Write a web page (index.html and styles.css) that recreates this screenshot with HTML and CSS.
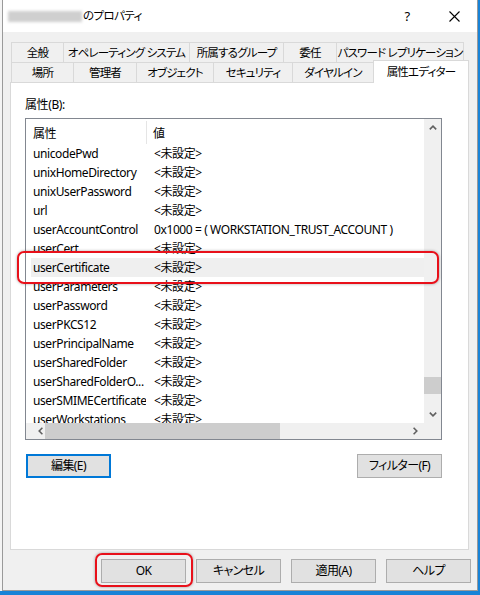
FILE: index.html
```html
<!DOCTYPE html>
<html lang="ja">
<head>
<meta charset="utf-8">
<title>プロパティ</title>
<link rel="stylesheet" href="styles.css">
</head>
<body>
<div class="screen">
  <div class="gap"></div>
  <div class="window">
    <div class="titlebar">
      <div class="title"><span class="redacted"></span><span class="title-text">のプロパティ</span></div>
      <div class="caption">
        <span class="cap-btn help">?</span>
        <span class="cap-btn close"><svg width="11" height="11" viewBox="0 0 11 11"><path d="M0.5 0.5 L10.5 10.5 M10.5 0.5 L0.5 10.5" stroke="#000" stroke-width="1.1" fill="none"/></svg></span>
      </div>
    </div>
    <div class="client">
      <div class="tabs">
        <div class="tabrow">
          <div class="tab t1">全般</div>
          <div class="tab t2">オペレーティング システム</div>
          <div class="tab t3">所属するグループ</div>
          <div class="tab t4">委任</div>
          <div class="tab t5 last">パスワード レプリケーション</div>
        </div>
        <div class="tabrow">
          <div class="tab u1">場所</div>
          <div class="tab u2">管理者</div>
          <div class="tab u3">オブジェクト</div>
          <div class="tab u4">セキュリティ</div>
          <div class="tab u5">ダイヤルイン</div>
          <div class="tab u6 sel">属性エディター</div>
        </div>
      </div>
      <div class="panel">
        <div class="label">属性(B):</div>
        <div class="listbox">
          <div class="listview">
            <div class="lv-header"><div class="h-name">属性</div><div class="h-val">値</div></div>
            <div class="lv-row"><div class="c-name">unicodePwd</div><div class="c-val">&lt;未設定&gt;</div></div>
            <div class="lv-row"><div class="c-name">unixHomeDirectory</div><div class="c-val">&lt;未設定&gt;</div></div>
            <div class="lv-row"><div class="c-name">unixUserPassword</div><div class="c-val">&lt;未設定&gt;</div></div>
            <div class="lv-row"><div class="c-name">url</div><div class="c-val">&lt;未設定&gt;</div></div>
            <div class="lv-row"><div class="c-name">userAccountControl</div><div class="c-val">0x1000 = ( WORKSTATION_TRUST_ACCOUNT )</div></div>
            <div class="lv-row"><div class="c-name">userCert</div><div class="c-val">&lt;未設定&gt;</div></div>
            <div class="lv-row sel"><div class="c-name">userCertificate</div><div class="c-val">&lt;未設定&gt;</div></div>
            <div class="lv-row"><div class="c-name">userParameters</div><div class="c-val">&lt;未設定&gt;</div></div>
            <div class="lv-row"><div class="c-name">userPassword</div><div class="c-val">&lt;未設定&gt;</div></div>
            <div class="lv-row"><div class="c-name">userPKCS12</div><div class="c-val">&lt;未設定&gt;</div></div>
            <div class="lv-row"><div class="c-name">userPrincipalName</div><div class="c-val">&lt;未設定&gt;</div></div>
            <div class="lv-row"><div class="c-name">userSharedFolder</div><div class="c-val">&lt;未設定&gt;</div></div>
            <div class="lv-row"><div class="c-name">userSharedFolderO...</div><div class="c-val">&lt;未設定&gt;</div></div>
            <div class="lv-row"><div class="c-name">userSMIMECertificate</div><div class="c-val">&lt;未設定&gt;</div></div>
            <div class="lv-row"><div class="c-name">userWorkstations</div><div class="c-val">&lt;未設定&gt;</div></div>
          </div>
          <div class="vscroll">
            <div class="sb-btn"><svg width="8" height="5" viewBox="0 0 8 5"><path d="M0.8 4.4 L4 1.2 L7.2 4.4" stroke="#606060" stroke-width="1.6" fill="none"/></svg></div>
            <div class="v-track"><div class="v-thumb"></div></div>
            <div class="sb-btn"><svg width="8" height="5" viewBox="0 0 8 5"><path d="M0.8 0.6 L4 3.8 L7.2 0.6" stroke="#606060" stroke-width="1.6" fill="none"/></svg></div>
          </div>
          <div class="hscroll">
            <div class="sb-btn hl"><svg width="5" height="8" viewBox="0 0 5 8"><path d="M4.4 0.8 L1.2 4 L4.4 7.2" stroke="#606060" stroke-width="1.6" fill="none"/></svg></div>
            <div class="h-track"><div class="h-thumb"></div></div>
            <div class="sb-btn hr"><svg width="5" height="8" viewBox="0 0 5 8"><path d="M0.6 0.8 L3.8 4 L0.6 7.2" stroke="#606060" stroke-width="1.6" fill="none"/></svg></div>
          </div>
          <div class="corner"></div>
        </div>
        <div class="panel-btns">
          <button class="btn focus">編集(E)</button>
          <button class="btn">フィルター(F)</button>
        </div>
        <div class="annot annot-row"></div>
      </div>
      <div class="dlg-btns">
        <button class="btn ok">OK</button>
        <button class="btn">キャンセル</button>
        <button class="btn">適用(A)</button>
        <button class="btn">ヘルプ</button>
      </div>
    </div>
  </div>
  <div class="accent"></div>
</div>
<div class="accent-bottom"></div>
</body>
</html>
```

FILE: styles.css
```css
* { box-sizing: border-box; }

body {
  margin: 0;
  width: 480px;
  height: 595px;
  overflow: hidden;
  background: #ffffff;
  font-family: "Noto Sans", "Noto Sans CJK JP", sans-serif;
  font-size: 12px;
  letter-spacing: -0.4px;
  font-feature-settings: "palt";
  color: #000;
}

.screen {
  display: flex;
  height: 591px;
}

.gap { width: 2px; background: #f4f4f4; }

.window {
  width: 476px;
  height: 591px;
  border-left: 1px solid #9a9a9a;
  border-right: 1px solid #9a9a9a;
  border-bottom: 1px solid #9a9a9a;
  display: flex;
  flex-direction: column;
  background: #f0f0f0;
}

.accent { width: 2px; background: #1883d7; }
.accent-bottom { height: 4px; background: #1883d7; }

/* title bar */
.titlebar {
  height: 32px;
  background: #ffffff;
  display: flex;
  align-items: center;
  justify-content: space-between;
}

.title {
  padding-left: 5px;
  display: flex;
  align-items: center;
  line-height: 16px;
}

.title-text {
  font-size: 11.5px;
  letter-spacing: -0.6px;
}

.redacted {
  display: inline-block;
  width: 74px;
  height: 11px;
  background: #cfcfcf;
  filter: blur(1.6px);
  margin-right: 1px;
}

.caption { display: flex; height: 32px; }

.cap-btn {
  width: 46px;
  height: 32px;
  display: flex;
  align-items: center;
  justify-content: center;
}

.help { font-size: 13px; padding-right: 2px; }

/* client area */
.client {
  flex: 1;
  padding: 10px 8px 0 7px;
  display: flex;
  flex-direction: column;
}

.tabs { display: flex; flex-direction: column; }

.tabrow {
  display: flex;
  margin-left: 1px;
  height: 20px;
}

.tab {
  height: 20px;
  border-top: 1px solid #d9d9d9;
  border-left: 1px solid #d9d9d9;
  background: #f0f0f0;
  display: flex;
  align-items: center;
  justify-content: center;
  white-space: nowrap;
  line-height: 16px;
  padding-top: 1px;
  font-size: 11.5px;
  letter-spacing: -0.8px;
}

.tab.last { border-right: 1px solid #d9d9d9; }

.t1 { width: 52px; }
.t2 { width: 126px; }
.t3 { width: 94px; }
.t4 { width: 53px; }
.t5 { width: 128px; }

.u1 { width: 62px; }
.u2 { width: 63px; }
.u3 { width: 77px; }
.u4 { width: 79px; }
.u5 { width: 81px; }
.u6 { width: 96px; }

.tab.sel {
  background: #ffffff;
  height: 23px;
  margin-top: -2px;
  border-right: 1px solid #d9d9d9;
  position: relative;
  z-index: 1;
  padding-top: 0;
}

/* tab page */
.panel {
  height: 468px;
  background: #ffffff;
  border: 1px solid #d9d9d9;
  padding: 14px 0 0 14px;
  position: relative;
}

.label {
  line-height: 16px;
  height: 16px;
  margin-bottom: 5px;
}

.listbox {
  width: 417px;
  height: 322px;
  border: 1px solid #828790;
  display: grid;
  grid-template-columns: 1fr 17px;
  grid-template-rows: 1fr 16px;
  background: #ffffff;
}

.listview {
  overflow: hidden;
  white-space: nowrap;
}

.lv-header {
  height: 25px;
  display: flex;
  align-items: center;
  padding-top: 3px;
}

.h-name {
  width: 121px;
  padding-left: 7px;
  border-right: 1px solid #e5e5e5;
  height: 23px;
  margin-top: -2px;
  line-height: 23px;
  padding-top: 1px;
}

.h-val { padding-left: 6px; }

.lv-row {
  height: 19px;
  line-height: 19px;
  display: flex;
}

.lv-row.sel {
  background: linear-gradient(to right, transparent 5px, #efefef 5px);
}

.c-name {
  width: 120px;
  padding-left: 7px;
  overflow: hidden;
}

.c-val { padding-left: 8px; }

/* scrollbars */
.vscroll {
  background: #f0f0f0;
  display: flex;
  flex-direction: column;
}

.sb-btn {
  width: 17px;
  height: 17px;
  display: flex;
  align-items: center;
  justify-content: center;
  flex: none;
}

.v-track { flex: 1; }

.v-thumb {
  margin-top: 241px;
  height: 17px;
  background: #cdcdcd;
}

.hscroll {
  background: #f0f0f0;
  display: flex;
  align-items: stretch;
}

.hscroll .sb-btn { height: 16px; }

.sb-btn.hl {
  width: 19px;
  justify-content: flex-end;
  padding-right: 2px;
}

.h-track { flex: 1; }

.h-thumb {
  width: 235px;
  height: 16px;
  background: #cdcdcd;
}

.corner { background: #f0f0f0; }

/* buttons */
.btn {
  font-family: inherit;
  font-size: 12px;
  letter-spacing: -0.6px;
  font-feature-settings: "palt";
  color: #000;
  background: #e1e1e1;
  border: 1px solid #adadad;
  height: 24px;
  width: 85px;
  padding: 0;
  margin: 0;
  line-height: 20px;
}

.btn.focus {
  border: 2px solid #0078d7;
}

.panel-btns {
  width: 417px;
  margin-top: 14px;
  padding-left: 1px;
  display: flex;
  justify-content: space-between;
}

.dlg-btns {
  margin-top: 9px;
  margin-right: -2px;
  display: flex;
  justify-content: flex-end;
  gap: 10px;
}

.ok { position: relative; }

/* red annotations */
.annot {
  position: absolute;
  border: 2px solid #e8101a;
  border-radius: 7px;
  box-shadow: 0 0 3px rgba(0, 0, 0, 0.35);
  pointer-events: none;
}

.annot-row {
  left: 6px;
  top: 168px;
  width: 422px;
  height: 33px;
}

.ok::after {
  content: "";
  position: absolute;
  left: -7px;
  top: -7px;
  right: -8px;
  bottom: -5px;
  border: 2px solid #e8101a;
  border-radius: 7px;
  box-shadow: 0 0 3px rgba(0, 0, 0, 0.35);
}
```
